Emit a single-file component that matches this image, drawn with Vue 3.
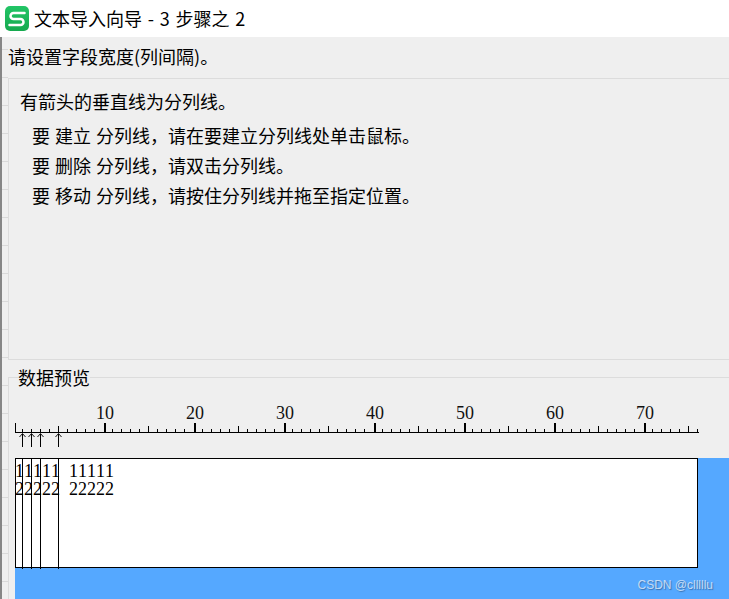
<script setup>
const ticks = [];
for (let x = 22; x < 698; x += 9) {
  const isMajor = (x - 103) % 90 === 0;
  const isMid = (x - 58) % 90 === 0;
  if (isMajor) ticks.push({ x: x + 1, w: 2, h: 10 });
  else ticks.push({ x, w: 1, h: isMid ? 7 : 4 });
}
const labels = [10, 20, 30, 40, 50, 60, 70];
const splits = [22, 31, 40, 58];
const guides = [
  { verb: '建立', rest: '分列线，请在要建立分列线处单击鼠标。' },
  { verb: '删除', rest: '分列线，请双击分列线。' },
  { verb: '移动', rest: '分列线，请按住分列线并拖至指定位置。' }
];
</script>

<template>
  <div class="dialog">
    <header class="titlebar">
      <svg class="logo" width="24" height="25" viewBox="0 0 24 25">
        <defs>
          <linearGradient id="wps" x1="0" y1="0" x2="0" y2="1">
            <stop offset="0" stop-color="#22c566" />
            <stop offset="1" stop-color="#16a94f" />
          </linearGradient>
        </defs>
        <rect width="24" height="25" rx="5" fill="url(#wps)" />
        <path d="M19.5 7H8.5a3 3 0 0 0 0 6h7a3 3 0 0 1 0 6H4.5" fill="none" stroke="#fff" stroke-width="2.5" stroke-linecap="round" />
      </svg>
      <span class="title">文本导入向导 - 3 步骤之 2</span>
    </header>
    <div class="body">
      <div class="gutter"></div>
      <main class="content">
        <p class="hint">请设置字段宽度(列间隔)。</p>
        <section class="help">
          <p class="help-head">有箭头的垂直线为分列线。</p>
          <p v-for="g in guides" :key="g.verb" class="help-row">要 {{ g.verb }} {{ g.rest }}</p>
        </section>
        <section class="preview">
          <span class="legend">数据预览</span>
          <svg class="ruler" width="714" height="80" viewBox="0 0 714 80" shape-rendering="crispEdges">
            <rect x="0" y="54" width="684" height="1" fill="#000" />
            <rect x="0" y="45" width="1" height="10" fill="#000" />
            <rect v-for="t in ticks" :key="t.x" :x="t.x - 15" :y="55 - t.h" :width="t.w" :height="t.h" fill="#000" />
            <text v-for="n in labels" :key="n" class="ruler-label" :x="n * 9" y="41" text-anchor="middle">{{ n }}</text>
            <g v-for="s in splits" :key="s" fill="none" stroke="#000" shape-rendering="auto">
              <path :d="`M${s - 14.5} 55.5V69`" shape-rendering="crispEdges" />
              <path :d="`M${s - 17.5} 59L${s - 14.5} 55.5L${s - 11.5} 59`" stroke-width="0.9" />
            </g>
          </svg>
          <div class="stage">
            <div class="sheet">
              <div class="rows">
                <div>11111 11111</div>
                <div>22222 22222</div>
              </div>
              <i v-for="s in splits" :key="s" class="split" :style="{ left: s - 16 + 'px' }"></i>
            </div>
            <span class="mark">CSDN @clllllu</span>
          </div>
        </section>
      </main>
    </div>
  </div>
</template>

<style>
html, body { margin: 0; padding: 0; overflow: hidden; }
</style>

<style scoped>
.dialog {
  width: 729px;
  height: 599px;
  display: flex;
  flex-direction: column;
  overflow: hidden;
  background: #efefef;
  color: #000;
  font-family: "Noto Sans CJK SC", "Liberation Sans", sans-serif;
  font-size: 18px;
}
.titlebar {
  height: 37px;
  flex: none;
  display: flex;
  align-items: center;
  background: #fff;
  padding: 0 0 0 5px;
  box-sizing: border-box;
}
.logo { flex: none; margin-right: 5px; }
.title { line-height: 37px; white-space: pre; word-spacing: 1.75px; }
.body { flex: 1; display: flex; min-height: 0; }
.gutter {
  flex: none;
  width: 6px;
  border-left: 2px solid #868686;
  background-image: linear-gradient(to bottom, #d9d9d9 1px, transparent 1px);
  background-size: 100% 28px;
  background-position: 0 12px;
}
.content { flex: 1; min-width: 0; display: flex; flex-direction: column; }
.hint { margin: 0; height: 41px; line-height: 39px; flex: none; }
.help {
  flex: none;
  height: 282px;
  box-sizing: border-box;
  border: 1px solid #dcdcdc;
  border-right: 0;
  padding: 7px 0 0 11px;
}
.help p { margin: 0; line-height: 30px; white-space: pre; word-spacing: 1px; }
.help-head { margin-bottom: 4px !important; }
.help-row { padding-left: 12px; }
.preview {
  flex: 1;
  margin-top: 17px;
  position: relative;
  border-top: 1px solid #dcdcdc;
  border-left: 1px solid #dcdcdc;
  padding-left: 6px;
  display: flex;
  flex-direction: column;
  min-height: 0;
}
.legend {
  position: absolute;
  left: 9px;
  top: -13px;
  line-height: 24px;
  background: #efefef;
}
.ruler { display: block; flex: none; }
.ruler-label {
  font-family: "Liberation Serif", serif;
  font-size: 18px;
  font-kerning: none;
  fill: #111;
}
.stage {
  flex: 1;
  position: relative;
  background: #55a8ff;
}
.sheet {
  position: relative;
  width: 683px;
  height: 110px;
  box-sizing: border-box;
  border: 1px solid #000;
  background: #fff;
}
.rows {
  padding-top: 3px;
  margin-left: -1px;
  font-family: "Liberation Serif", serif;
  font-size: 18px;
  font-kerning: none;
  line-height: 18px;
  word-spacing: 4.5px;
  white-space: pre;
  color: #000;
}
.split {
  position: absolute;
  top: -1px;
  bottom: -2px;
  width: 1px;
  background: #000;
}
.mark {
  position: absolute;
  right: 16px;
  bottom: 6px;
  font-family: "Liberation Sans", sans-serif;
  font-size: 12px;
  line-height: 16px;
  color: rgba(226, 236, 246, 0.8);
  text-shadow: 1px 1px 1px rgba(40, 70, 110, 0.55);
}
</style>
